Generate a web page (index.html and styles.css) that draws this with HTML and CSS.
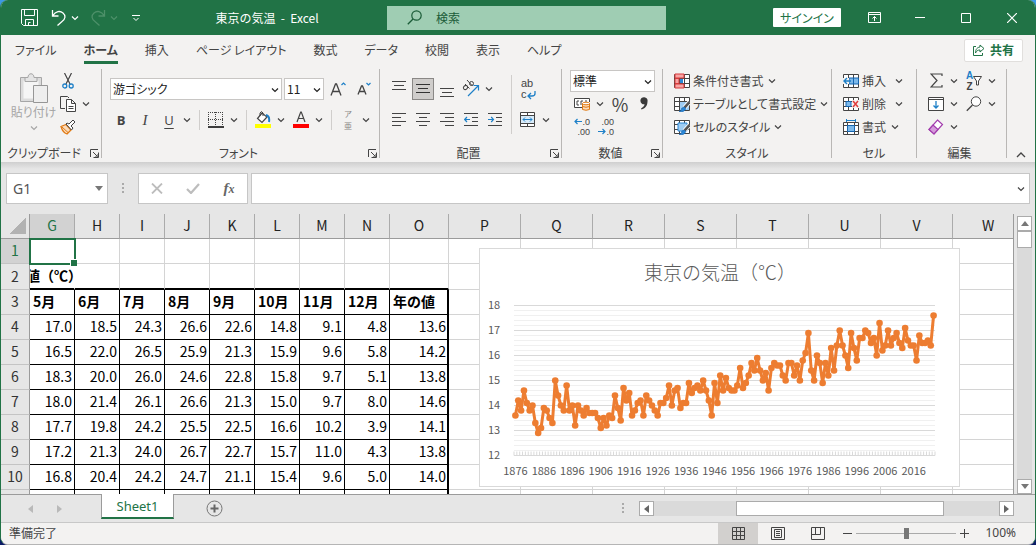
FILE: index.html
```
<!DOCTYPE html>
<html lang="ja">
<head>
    <meta charset="UTF-8">
    <meta name="viewport" content="width=device-width, initial-scale=1.0">
    <title>東京の気温 - Excel</title>
    <link rel="stylesheet" href="styles.css">
</head>
<body>
    <!-- Shared icons -->
    <svg class="sprite" aria-hidden="true">
        <symbol id="chev" viewBox="0 0 8 6"><path d="M1 1.5l3 3 3-3" fill="none" stroke="currentColor" stroke-width="1.2"/></symbol>
        <symbol id="launcher" viewBox="0 0 9 9"><path d="M.5 8V.5H8M3 3l4 4M8.500 3.500v5h-5M8 5v3H5" fill="none" stroke="currentColor"/></symbol>
        <symbol id="grid" viewBox="0 0 16 16"><path d="M.5 1.500h15v13H.5zM5.500 1.500v13M10.500 1.500v13M.5 5.500h15M.5 10.500h15" fill="#fff" stroke="#444"/></symbol>
        <symbol id="brush" viewBox="0 0 10 10"><path d="M9.500 1L5 6" stroke="#fff" stroke-width="4"/><path d="M9.500 1L5 6" stroke="#555" stroke-width="2.400"/><path d="M5 5.500L2.500 6.500Q2.500 9 0 9.500Q5 10.500 6 7z" fill="#2b88d8" stroke="#1565b0" stroke-width=".6"/></symbol>
    </svg>

    <div class="window">
        <header class="titlebar">
            <div class="title-left">
                <div class="quick">
                    <button class="qbtn" aria-label="上書き保存"><svg width="17" height="17" viewBox="0 0 17 17"><path d="M.5.5h16v16H2.500l-2-2zM3.500.5v6h10v-6M4.500 16.500v-6h8v6M7.500 16.500v-3h2" fill="none" stroke="#fff"/></svg></button>
                    <button class="qbtn undo" aria-label="元に戻す"><svg width="16" height="17" viewBox="0 0 16 17"><path d="M1.500 1v6h6M1.500 7C5 2 9 1.500 12 4s2.500 6-1 8.500L6.500 16.500" fill="none" stroke="#fff" stroke-width="1.300"/></svg><svg class="chev"><use href="#chev"/></svg></button>
                    <button class="qbtn redo" aria-label="やり直し"><svg width="16" height="17" viewBox="0 0 16 17"><path d="M14.500 1v6h-6M14.500 7C11 2 7 1.500 4 4s-2.500 6 1 8.500l4.500 4" fill="none" stroke="currentColor" stroke-width="1.300"/></svg><svg class="chev"><use href="#chev"/></svg></button>
                    <button class="qbtn custom" aria-label="カスタマイズ"><svg width="8" height="8" viewBox="0 0 8 8"><path d="M0 1.500h8M1.500 4L4 6.500 6.500 4" fill="none" stroke="#fff"/></svg></button>
                </div>
                <div class="doc-title">東京の気温&nbsp; -&nbsp; Excel</div>
            </div>
            <label class="search">
                <svg width="15" height="15" viewBox="0 0 15 15"><circle cx="9.500" cy="5.500" r="4.700" fill="none" stroke="#1b5c38" stroke-width="1.200"/><path d="M6 9L.8 14.200" stroke="#1b5c38" stroke-width="1.300"/></svg>
                <input type="text" placeholder="検索" aria-label="検索">
            </label>
            <div class="title-right">
                <button class="signin">サインイン</button>
                <button class="winbtn" aria-label="リボンの表示"><svg width="13" height="11" viewBox="0 0 13 11"><path d="M.5.5h12v10H.5zM.5 2.500h12M6.500 9V4.500M4.500 6.500l2-2 2 2" fill="none" stroke="#fff"/></svg></button>
                <button class="winbtn" aria-label="最小化"><svg width="10" height="10" viewBox="0 0 10 10"><path d="M0 4.500h10" stroke="#fff"/></svg></button>
                <button class="winbtn" aria-label="最大化"><svg width="10" height="10" viewBox="0 0 10 10"><path d="M.5.5h9v9h-9z" fill="none" stroke="#fff"/></svg></button>
                <button class="winbtn" aria-label="閉じる"><svg width="10" height="10" viewBox="0 0 10 10"><path d="M0 0l10 10M10 0L0 10" stroke="#fff" stroke-width="1.200"/></svg></button>
            </div>
        </header>

        <nav class="tabs">
            <a href="#">ファイル</a>
            <a href="#" class="active">ホーム</a>
            <a href="#">挿入</a>
            <a href="#">ページ レイアウト</a>
            <a href="#">数式</a>
            <a href="#">データ</a>
            <a href="#">校閲</a>
            <a href="#">表示</a>
            <a href="#">ヘルプ</a>
            <button class="share"><svg width="12" height="12" viewBox="0 0 12 12"><path d="M3 2.500H.5v9h9V9M7 1l4 3.500L7 8V6C4.500 6 3.500 7 2.500 9 2.500 5 4.500 3.300 7 3z" fill="none" stroke="#217346"/></svg>共有</button>
        </nav>

        <div class="ribbon">
            <section class="group clipboard">
                <div class="tools split">
                    <button class="paste">
                        <svg width="28" height="31" viewBox="0 0 28 31"><path d="M.5 4.500h21v24H.5z" fill="#dcdcdc" stroke="#a6a6a6"/><path d="M3.500 7.500h15v18h-15z" fill="#f5f5f5"/><path d="M5 8.500V4.500h3c0-5 6-5 6 0h3v4z" fill="#e4e4e4" stroke="#a6a6a6"/><path d="M13.500 12.500h14v17h-14z" fill="#eee" stroke="#969696"/></svg>
                        <span>貼り付け</span>
                        <svg class="chev"><use href="#chev"/></svg>
                    </button>
                    <div class="rows">
                        <div class="row"><button class="tool" aria-label="切り取り"><svg width="12" height="16" viewBox="0 0 12 16"><path d="M2.500 0L8 11M9.500 0L4 11" stroke="#444" stroke-width="1.200"/><circle cx="2.800" cy="13" r="2" fill="none" stroke="#1e80c8" stroke-width="1.300"/><circle cx="9.200" cy="13" r="2" fill="none" stroke="#1e80c8" stroke-width="1.300"/></svg></button></div>
                        <div class="row"><button class="tool" aria-label="コピー"><svg width="16" height="16" viewBox="0 0 16 16"><path d="M5 12.500H.5V.5h7L9 2" fill="none" stroke="#444"/><path d="M6.500 3.500h5l4 4v8h-9zM11.500 3.500v4h4M8.500 10.500h5M8.500 12.500h5" fill="#fff" stroke="#444"/></svg></button><button class="drop" aria-label="コピー オプション"><svg class="chev"><use href="#chev"/></svg></button></div>
                        <div class="row"><button class="tool" aria-label="書式のコピー"><svg width="16" height="16" viewBox="0 0 16 16"><path d="M1 7.500l5-2 5 5.500-4 4C4 14 2 11 1 7.500z" fill="#fbdcbc" stroke="#e07a14" stroke-width="1.300"/><path d="M2 8l6 5.500" stroke="#e07a14"/><path d="M6 5l5.500 6 1.500-2-2-2L15 3l-2-2-4 4-2-1z" fill="#fff" stroke="#444"/></svg></button></div>
                    </div>
                </div>
                <div class="caption">クリップボード<button class="launch" aria-label="クリップボードの詳細"><svg width="9" height="9"><use href="#launcher"/></svg></button></div>
            </section>

            <section class="group font">
                <div class="tools two">
                    <div class="row gap">
                        <div class="combo font-name"><select aria-label="フォント"><option>游ゴシック</option></select><svg class="chev"><use href="#chev"/></svg></div>
                        <div class="combo font-size"><select aria-label="フォント サイズ"><option>11</option></select><svg class="chev"><use href="#chev"/></svg></div>
                        <button class="tool" aria-label="拡大"><svg width="16" height="16" viewBox="0 0 16 16"><path d="M1 14.500L5.500 3h1L11 14.500M2.500 10.500h7" fill="none" stroke="#444" stroke-width="1.300"/><path d="M11.500 4l2-2 2 2" fill="none" stroke="#1e80c8" stroke-width="1.200"/></svg></button>
                        <button class="tool" aria-label="縮小"><svg width="14" height="16" viewBox="0 0 14 16"><path d="M1 13.500L4.500 5h1L9 13.500M2.500 10.500h5" fill="none" stroke="#444" stroke-width="1.300"/><path d="M9.500 2l2 2 2-2" fill="none" stroke="#1e80c8" stroke-width="1.200"/></svg></button>
                    </div>
                    <div class="row">
                        <button class="tool letter bold">B</button>
                        <button class="tool letter italic">I</button>
                        <button class="tool letter under">U</button>
                        <button class="drop" aria-label="下線"><svg class="chev"><use href="#chev"/></svg></button>
                        <i class="sep"></i>
                        <button class="tool" aria-label="罫線"><svg width="16" height="16" viewBox="0 0 16 16"><path d="M0 .5h16M0 7.500h16M.5 0v14M7.500 0v14M14.500 0v14" stroke="#444" stroke-dasharray="1 1"/><path d="M0 15h16" stroke="#000" stroke-width="1.500"/></svg></button>
                        <button class="drop" aria-label="罫線の種類"><svg class="chev"><use href="#chev"/></svg></button>
                        <i class="sep"></i>
                        <button class="tool" aria-label="塗りつぶし"><svg width="16" height="17" viewBox="0 0 16 17"><path d="M7 2L2.500 7.500 7 11.500 12 6z" fill="#fff" stroke="#444" stroke-width="1.200"/><path d="M5 5V2q1.500-3 3 0v3" fill="none" stroke="#444"/><path d="M11 4q4 1 3 7" fill="none" stroke="#1e80c8" stroke-width="2"/><path d="M0 13h16v4H0z" fill="#ff0"/></svg></button>
                        <button class="drop" aria-label="塗りつぶしの色"><svg class="chev"><use href="#chev"/></svg></button>
                        <button class="tool" aria-label="文字の色"><svg width="16" height="17" viewBox="0 0 16 17"><path d="M4 11L7.700 1h.6L12 11M5.500 7.500h5" fill="none" stroke="#444" stroke-width="1.200"/><path d="M0 13h16v4H0z" fill="red"/></svg></button>
                        <button class="drop" aria-label="フォントの色"><svg class="chev"><use href="#chev"/></svg></button>
                        <i class="sep"></i>
                        <button class="tool ruby">ア<br>亜</button>
                        <button class="drop" aria-label="ふりがな"><svg class="chev"><use href="#chev"/></svg></button>
                    </div>
                </div>
                <div class="caption">フォント<button class="launch" aria-label="フォントの詳細"><svg width="9" height="9"><use href="#launcher"/></svg></button></div>
            </section>

            <section class="group align">
                <div class="tools split">
                    <div class="rows two align-main">
                        <div class="row">
                            <button class="tool" aria-label="上揃え"><svg width="14" height="16" viewBox="0 0 14 16"><path d="M0 .5h14M2 4.500h10M0 8.500h14" stroke="#444"/></svg></button>
                            <button class="tool pressed" aria-label="上下中央揃え"><svg width="14" height="16" viewBox="0 0 14 16"><path d="M0 3.500h14M2 7.500h10M0 11.500h14" stroke="#333"/></svg></button>
                            <button class="tool" aria-label="下揃え"><svg width="14" height="16" viewBox="0 0 14 16"><path d="M0 7.500h14M2 11.500h10M0 15.500h14" stroke="#444"/></svg></button>
                            <button class="tool" aria-label="方向"><svg width="18" height="18" viewBox="0 0 18 18"><g fill="none" stroke="#444"><ellipse cx="3.500" cy="7.500" rx="2.200" ry="1.800" transform="rotate(-45 3.500 7.500)"/><path d="M3 4l4.500 4.500M5 0l5.500 6"/><ellipse cx="9.500" cy="3.500" rx="2" ry="2"/></g><path d="M6 16l10-10M11.500 5.500h5v5" fill="none" stroke="#1e80c8" stroke-width="1.200"/></svg></button>
                            <button class="drop" aria-label="方向の種類"><svg class="chev"><use href="#chev"/></svg></button>
                        </div>
                        <div class="row">
                            <button class="tool" aria-label="左揃え"><svg width="14" height="14" viewBox="0 0 14 14"><path d="M0 .5h14M0 4.500h9M0 8.500h14M0 12.500h9" stroke="#444"/></svg></button>
                            <button class="tool" aria-label="中央揃え"><svg width="14" height="14" viewBox="0 0 14 14"><path d="M0 .5h14M3 4.500h8M0 8.500h14M3 12.500h8" stroke="#444"/></svg></button>
                            <button class="tool" aria-label="右揃え"><svg width="14" height="14" viewBox="0 0 14 14"><path d="M0 .5h14M5 4.500h9M0 8.500h14M5 12.500h9" stroke="#444"/></svg></button>
                            <button class="tool" aria-label="インデントを減らす"><svg width="14" height="14" viewBox="0 0 14 14"><path d="M0 .5h14M8 4.500h6M8 8.500h6M0 12.500h14" stroke="#444"/><path d="M6 6.500H.8M3 4L.7 6.500 3 9" fill="none" stroke="#1e80c8" stroke-width="1.200"/></svg></button>
                            <button class="tool" aria-label="インデントを増やす"><svg width="14" height="14" viewBox="0 0 14 14"><path d="M0 .5h14M8 4.500h6M8 8.500h6M0 12.500h14" stroke="#444"/><path d="M0 6.500h5.500M3.200 4l2.300 2.500L3.200 9" fill="none" stroke="#1e80c8" stroke-width="1.200"/></svg></button>
                        </div>
                    </div>
                    <i class="sep tall"></i>
                    <div class="rows two">
                        <div class="row"><button class="tool wrap" aria-label="折り返して全体を表示">ab<br>c<svg width="9" height="9" viewBox="0 0 9 9"><path d="M8 0v2.500Q8 5 5 5H1M4 2L1 5l3 3" fill="none" stroke="#1e80c8" stroke-width="1.300"/></svg></button></div>
                        <div class="row"><button class="tool" aria-label="セルを結合"><svg width="16" height="16" viewBox="0 0 16 16"><path d="M.5.5h14v14H.5zM.5 3.500h14M.5 11.500h14M7.500.5v3M7.500 11.500v3" fill="#fff" stroke="#444"/><path d="M1 4h13v7H1z" fill="#d8ebf9"/><path d="M3 7.500h9M5 5.500l-2 2 2 2M10 5.500l2 2-2 2" fill="none" stroke="#1e80c8"/></svg></button><button class="drop" aria-label="結合の種類"><svg class="chev"><use href="#chev"/></svg></button></div>
                    </div>
                </div>
                <div class="caption">配置<button class="launch" aria-label="配置の詳細"><svg width="9" height="9"><use href="#launcher"/></svg></button></div>
            </section>

            <section class="group number">
                <div class="tools rows">
                    <div class="row"><div class="combo"><select aria-label="数値の書式"><option>標準</option></select><svg class="chev"><use href="#chev"/></svg></div></div>
                    <div class="row">
                        <button class="tool" aria-label="通貨"><svg width="17" height="14" viewBox="0 0 17 14"><path d="M8 10.500H.5v-9h15V5" fill="#fff" stroke="#444"/><path d="M5 4H3v4h2M7 8V4h2M11 4h2" fill="none" stroke="#444"/><path d="M8.500 6.500v6q3.500 1.500 7 0v-6z" fill="#fbdcbc" stroke="#e07a14"/><ellipse cx="12" cy="6.500" rx="3.500" ry="1.300" fill="#fff" stroke="#e07a14"/><path d="M8.500 9.500q3.500 1.500 7 0" fill="none" stroke="#e07a14"/></svg></button>
                        <button class="drop" aria-label="通貨の種類"><svg class="chev"><use href="#chev"/></svg></button>
                        <button class="tool percent">%</button>
                        <button class="tool" aria-label="桁区切り"><svg width="8" height="13" viewBox="0 0 8 13"><path d="M7.500 4.500C7.500 9 5 11.500 1.500 12.500L1 11.500C3 10.500 4.500 9 4.500 7.300A3.600 3.600 0 1 1 7.500 4.500z" fill="#3a3a3a"/></svg></button>
                    </div>
                    <div class="row">
                        <button class="tool decimals"><svg width="8" height="7" viewBox="0 0 8 7"><path d="M8 3.500H1M3.500 1L1 3.500 3.500 6" fill="none" stroke="#1e80c8" stroke-width="1.200"/></svg>.0<br>.00</button>
                        <button class="tool decimals">.00<br><svg width="8" height="7" viewBox="0 0 8 7"><path d="M0 3.500h7M4.500 1L7 3.500 4.500 6" fill="none" stroke="#1e80c8" stroke-width="1.200"/></svg>.0</button>
                    </div>
                </div>
                <div class="caption">数値<button class="launch" aria-label="数値の詳細"><svg width="9" height="9"><use href="#launcher"/></svg></button></div>
            </section>

            <section class="group styles">
                <div class="tools rows">
                    <button class="wide"><svg width="16" height="16" viewBox="0 0 16 16"><use href="#grid"/><path d="M1 1h9v4H1zM1 11h9v4H1z" fill="#f8a5a5" stroke="#d83b3b"/><path d="M1 5.500h4v5H1z" fill="#f8a5a5" stroke="#d83b3b"/><path d="M6 6h3v4H6z" fill="#2b88d8"/></svg>条件付き書式<svg class="chev"><use href="#chev"/></svg></button>
                    <button class="wide"><svg width="16" height="16" viewBox="0 0 16 16"><use href="#grid"/><path d="M6 6h9v8H6z" fill="#9fcdf3"/><use href="#brush" x="5" y="5" width="11" height="11"/></svg>テーブルとして書式設定<svg class="chev"><use href="#chev"/></svg></button>
                    <button class="wide"><svg width="16" height="16" viewBox="0 0 16 16"><use href="#grid"/><path d="M4 4h9v8H4z" fill="#9fcdf3" stroke="#2b88d8"/><use href="#brush" x="5" y="5" width="11" height="11"/></svg>セルのスタイル<svg class="chev"><use href="#chev"/></svg></button>
                </div>
                <div class="caption">スタイル</div>
            </section>

            <section class="group cells">
                <div class="tools rows">
                    <button class="wide"><svg width="16" height="16" viewBox="0 0 16 16"><use href="#grid"/><path d="M6 5h9.500v6H6z" fill="#7db9ea" stroke="#1565b0"/><path d="M10.500 5v6" stroke="#1565b0"/><path d="M0 5h6v6H0z" fill="#f3f2f1"/><path d="M8 8H1M4 5L1 8l3 3" fill="none" stroke="#1e80c8" stroke-width="1.400"/></svg><span>挿入</span><svg class="chev"><use href="#chev"/></svg></button>
                    <button class="wide"><svg width="16" height="16" viewBox="0 0 16 16"><use href="#grid"/><path d="M3 5.500h5v5H3z" fill="#7db9ea" stroke="#1565b0"/><path d="M9 4h7v8H9z" fill="#f3f2f1"/><path d="M10 5l5 6M15 5l-5 6" stroke="#e03b3b" stroke-width="1.500"/></svg><span>削除</span><svg class="chev"><use href="#chev"/></svg></button>
                    <button class="wide short"><svg width="16" height="16" viewBox="0 0 16 16"><path d="M.5 3.500h15v12H.5zM4.500 3.500v12M11.500 3.500v12M.5 6.500h15M.5 12.500h15" fill="#fff" stroke="#444"/><path d="M4.500 6.500h7v6h-7z" fill="#7db9ea" stroke="#1565b0"/><path d="M3.500 1.500h9M3.500 0v3M12.500 0v3" stroke="#1e80c8"/></svg><span>書式</span><svg class="chev"><use href="#chev"/></svg></button>
                </div>
                <div class="caption">セル</div>
            </section>

            <section class="group edit">
                <div class="tools rows">
                    <div class="row">
                        <button class="tool" aria-label="合計"><svg width="13" height="15" viewBox="0 0 13 15"><path d="M12 3V1H1l6 6.500L1 14h11v-2" fill="none" stroke="#444" stroke-width="1.200"/></svg></button>
                        <button class="drop" aria-label="合計の種類"><svg class="chev"><use href="#chev"/></svg></button>
                        <button class="tool sort" aria-label="並べ替えとフィルター"><span><b>A</b><br>Z</span><svg width="9" height="10" viewBox="0 0 9 10"><path d="M.5.5h8L5.500 5v4h-2V5z" fill="#fff" stroke="#444"/></svg></button>
                        <button class="drop" aria-label="並べ替えの種類"><svg class="chev"><use href="#chev"/></svg></button>
                    </div>
                    <div class="row">
                        <button class="tool" aria-label="フィル"><svg width="16" height="14" viewBox="0 0 16 14"><path d="M.5.5h15v13H.5zM.5 2.500h15" fill="#fff" stroke="#444"/><path d="M8 4v7M5.500 8.500L8 11l2.500-2.500" fill="none" stroke="#1e80c8" stroke-width="1.300"/></svg></button>
                        <button class="drop" aria-label="フィルの種類"><svg class="chev"><use href="#chev"/></svg></button>
                        <button class="tool" aria-label="検索と選択"><svg width="16" height="16" viewBox="0 0 16 16"><circle cx="10" cy="5.500" r="4.700" fill="#fff" stroke="#444"/><path d="M6.500 9L.8 14.800" stroke="#444" stroke-width="1.300"/></svg></button>
                        <button class="drop" aria-label="検索の種類"><svg class="chev"><use href="#chev"/></svg></button>
                    </div>
                    <div class="row">
                        <button class="tool" aria-label="クリア"><svg width="16" height="16" viewBox="0 0 16 16"><path d="M9.500 1l5 4.500L6 15 1 10.500z" fill="#fff" stroke="#a23cad" stroke-width="1.200"/><path d="M5 6l5 4.500L6 15 1 10.500z" fill="#d59bdb" stroke="#a23cad" stroke-width="1.200"/></svg></button>
                        <button class="drop" aria-label="クリアの種類"><svg class="chev"><use href="#chev"/></svg></button>
                    </div>
                </div>
                <div class="caption">編集</div>
            </section>

            <button class="collapse" aria-label="リボンを折りたたむ"><svg width="10" height="6" viewBox="0 0 10 6"><path d="M1 5l4-4 4 4" fill="none" stroke="#444" stroke-width="1.300"/></svg></button>
        </div>

        <div class="formula-bar">
            <div class="name-box"><input type="text" value="G1" aria-label="名前ボックス"><i class="tri down"></i></div>
            <div class="dots"></div>
            <div class="fx">
                <button aria-label="キャンセル"><svg width="12" height="11" viewBox="0 0 12 11"><path d="M1 .5l10 10M11 .5l-10 10" stroke="#bdbdbd" stroke-width="1.800"/></svg></button>
                <button aria-label="入力"><svg width="14" height="11" viewBox="0 0 14 11"><path d="M1 6l4 4 8-9" fill="none" stroke="#bdbdbd" stroke-width="2.200"/></svg></button>
                <button class="fx-label"><i>f<small>x</small></i></button>
            </div>
            <div class="formula"><input type="text" aria-label="数式バー"><svg class="chev"><use href="#chev"/></svg></div>
        </div>

        <main class="sheet-area">
            <div class="sheet">
                <table>
                    <colgroup>
                        <col class="c-head"><col class="c-month"><col class="c-month"><col class="c-month"><col class="c-month"><col class="c-month"><col class="c-month"><col class="c-month"><col class="c-month"><col class="c-year"><col class="c-plain"><col class="c-plain"><col class="c-plain"><col class="c-plain"><col class="c-plain"><col class="c-plain"><col class="c-plain"><col>
                    </colgroup>
                    <thead>
                        <tr><th class="corner"></th><th class="on">G</th><th>H</th><th>I</th><th>J</th><th>K</th><th>L</th><th>M</th><th>N</th><th>O</th><th>P</th><th>Q</th><th>R</th><th>S</th><th>T</th><th>U</th><th>V</th><th class="last">W</th></tr>
                    </thead>
                    <tbody id="cells"></tbody>
                </table>
                <svg class="chart" id="chart"></svg>
            </div>
            <div class="vscroll">
                <button aria-label="上へ"><i class="tri up"></i></button>
                <div class="thumb"></div>
                <div class="space"></div>
                <button aria-label="下へ"><i class="tri down"></i></button>
            </div>
        </main>

        <div class="sheet-tabs">
            <div class="tab-nav">
                <button aria-label="前のシート"><i class="tri left"></i></button>
                <button aria-label="次のシート"><i class="tri right"></i></button>
            </div>
            <button class="sheet-tab">Sheet1</button>
            <button class="add" aria-label="新しいシート"><svg width="17" height="17" viewBox="0 0 17 17"><circle cx="8.500" cy="8.500" r="7.500" fill="none" stroke="#767676"/><path d="M8.500 4.500v8M4.500 8.500h8" stroke="#666" stroke-width="2"/></svg></button>
            <div class="dots"></div>
            <div class="hscroll">
                <button aria-label="左へ"><i class="tri left"></i></button>
                <div class="space before"></div>
                <div class="thumb"></div>
                <div class="space after"></div>
                <button aria-label="右へ"><i class="tri right"></i></button>
            </div>
        </div>

        <footer class="status">
            <span class="ready">準備完了</span>
            <button class="view on" aria-label="標準"><svg width="13" height="13" viewBox="0 0 13 13"><path d="M.5.5h12v12H.5zM4.500.5v12M8.500.5v12M.5 4.500h12M.5 8.500h12" fill="none" stroke="#444"/></svg></button>
            <button class="view" aria-label="ページ レイアウト"><svg width="14" height="13" viewBox="0 0 14 13"><path d="M.5.5h13v12H.5zM3.500 2.500h7v8h-7zM5 4.500h4M5 6.500h4M5 8.500h4" fill="none" stroke="#444"/></svg></button>
            <button class="view" aria-label="改ページ プレビュー"><svg width="14" height="13" viewBox="0 0 14 13"><path d="M.5.5h13v12H.5zM4.500.5v7M9.500.5v7M.5 7.500h9" fill="none" stroke="#444"/></svg></button>
            <button class="zoom-btn" aria-label="縮小"><svg width="9" height="9" viewBox="0 0 9 9"><path d="M0 4.500h9" stroke="#444"/></svg></button>
            <input type="range" class="zoom-range" min="0" max="100" value="50" aria-label="ズーム">
            <button class="zoom-btn" aria-label="拡大"><svg width="9" height="9" viewBox="0 0 9 9"><path d="M0 4.500h9M4.500 0v9" stroke="#444"/></svg></button>
            <span class="percent-label">100%</span>
        </footer>
    </div>
    <script src="script.js"></script>
</body>
</html>
```
FILE: styles.css
```
* {
    box-sizing: border-box;
}
body {
    margin: 0;
    font-family: "Noto Sans CJK JP", sans-serif;
    font-size: 12px;
    line-height: 16px;
    font-feature-settings: "palt";
    color: #444;
    background: linear-gradient(#3c9ae6, #0b1c66);
}
button, input, select {
    font: inherit;
    font-feature-settings: inherit;
    color: inherit;
    border: none;
    background: none;
    padding: 0;
    margin: 0;
}
button {
    display: flex;
    align-items: center;
    justify-content: center;
}
svg {
    display: block;
    flex: none;
}
.sprite {
    position: absolute;
    width: 0;
    height: 0;
}
.window {
    display: flex;
    flex-direction: column;
    height: 100vh;
    border: solid #217346;
    border-width: 0 1px;
    border-bottom: 1px solid #b5b5b5;
    border-radius: 8px;
    overflow: hidden;
    background: #e6e6e6;
}
.chev {
    width: 8px;
    height: 6px;
}

/* Title bar */
.titlebar {
    display: grid;
    grid-template-columns: 386fr 279fr 369fr;
    align-items: center;
    height: 35px;
    flex: none;
    background: #217346;
    color: #fff;
}
.title-left, .title-right, .quick {
    display: flex;
    align-items: center;
}
.quick {
    width: 146px;
    padding-left: 20px;
}
.qbtn {
    gap: 4px;
}
.qbtn.undo {
    margin-left: 13px;
}
.qbtn.redo {
    margin-left: 11px;
    color: #4d9069;
}
.qbtn.custom {
    margin-left: 14px;
}
.doc-title {
    flex: 1;
    text-align: center;
    font-feature-settings: normal;
}
.search {
    display: flex;
    align-items: center;
    gap: 14px;
    height: 24px;
    padding-left: 20px;
    background: #9fcdb3;
}
.search input {
    flex: 1;
    min-width: 0;
    height: 24px;
}
.search input::placeholder {
    color: #1b5c38;
    opacity: 1;
}
.title-right {
    justify-content: flex-end;
}
.signin {
    width: 68px;
    height: 19px;
    margin-right: 10px;
    border-radius: 1px;
    background: #fff;
    color: #217346;
}
.winbtn {
    width: 46px;
    height: 34px;
}

/* Ribbon tabs */
.tabs {
    display: flex;
    align-items: center;
    gap: 27px;
    height: 30px;
    flex: none;
    padding: 0 12px 0 14px;
    background: #f3f2f1;
}
.tabs a {
    color: #444;
    text-decoration: none;
    height: 24px;
    padding-top: 2px;
    margin-top: 3px;
}
.tabs .active {
    font-weight: bold;
    border-bottom: 3px solid #217346;
}
.share {
    gap: 5px;
    width: 59px;
    height: 23px;
    margin-left: auto;
    border: 1px solid #e1dfdd;
    border-radius: 2px;
    background: #fff;
    color: #217346;
    font-weight: bold;
}

/* Ribbon */
.ribbon {
    display: flex;
    height: 97px;
    flex: none;
    padding-top: 4px;
    background: #f3f2f1;
}
.group {
    position: relative;
    display: flex;
    flex-direction: column;
    height: 89px;
    padding-left: 7px;
}
.group::after {
    content: "";
    position: absolute;
    right: 0;
    top: 0;
    bottom: 0;
    width: 1px;
    background: #b9b7b5;
}
.clipboard {
    width: 101px;
}
.font {
    width: 278px;
}
.align {
    width: 182px;
}
.number {
    width: 101px;
    padding-left: 8px;
}
.styles {
    width: 169px;
    padding-left: 11px;
}
.cells {
    width: 85px;
    padding-left: 11px;
}
.edit {
    width: 90px;
}
.tools {
    flex: 1;
}
.split {
    display: flex;
}
.row {
    display: flex;
    align-items: center;
    height: 23px;
}
.two {
    display: flex;
    flex-direction: column;
    gap: 8px;
    padding-top: 8px;
}
.gap {
    gap: 2px;
    padding-left: 1px;
}
.tool {
    width: 24px;
    height: 22px;
    flex: none;
}
.drop {
    width: 12px;
    height: 22px;
    margin-right: 2px;
}
.sep {
    width: 1px;
    height: 20px;
    margin: 0 4px;
    background: #d0cecc;
}
.sep.tall {
    height: 59px;
    margin-top: 6px;
    margin-left: 0;
}
.caption {
    display: flex;
    justify-content: center;
    height: 16px;
    margin: 0 22px 0 10px;
    margin-bottom: -3px;
    white-space: nowrap;
}
.clipboard .caption {
    margin-left: 0;
}
.launch {
    position: absolute;
    right: 3px;
    bottom: 0;
}
.paste {
    flex-direction: column;
    justify-content: flex-start;
    width: 48px;
    height: 70px;
    padding: 4px 0 0 3px;
    white-space: nowrap;
    color: #a6a6a6;
}
.paste .chev {
    margin-top: 5px;
}
.combo {
    position: relative;
    height: 22px;
    border: 1px solid #c8c6c4;
    background: #fff;
    color: #222;
}
.combo select {
    width: 100%;
    height: 20px;
    padding-left: 2px;
    appearance: none;
}
.combo .chev {
    position: absolute;
    right: 2px;
    top: 8px;
}
.font-name {
    width: 172px;
}
.font-size {
    width: 40px;
}
.number .combo {
    width: 85px;
}
.letter {
    font-size: 13px;
    font-family: "Open Sans", sans-serif;
}
.bold {
    font-weight: bold;
}
.italic {
    font-family: "Liberation Serif", serif;
    font-style: italic;
    font-size: 15px;
}
.under {
    text-decoration: underline;
    text-underline-offset: 3px;
}
.ruby {
    display: block;
    font-size: 8px;
    line-height: 12px;
    height: 24px;
    color: #8a8886;
}
.pressed {
    width: 22px;
    margin: 0 1px;
    border: 1px solid #8a8886;
    background: #cfcdcb;
}
.align-main {
    width: 124px;
}
.wrap {
    display: block;
    position: relative;
    padding-left: 5px;
    text-align: left;
    font-family: "Liberation Sans", sans-serif;
    font-size: 11px;
    line-height: 11px;
}
.wrap svg {
    position: absolute;
    left: 11px;
    bottom: 0;
}
.percent {
    font-size: 18px;
}
.decimals {
    display: block;
    font-family: "Liberation Sans", sans-serif;
    font-size: 9px;
    line-height: 10px;
    text-align: right;
    padding-right: 4px;
}
.decimals svg {
    display: inline-block;
}
.wide {
    gap: 3px;
    height: 23px;
    white-space: nowrap;
}
.wide .chev {
    margin-left: 1px;
}
.cells .wide span {
    width: 29px;
    text-align: left;
}
.cells .short span {
    width: 25px;
}
.sort span {
    font-family: "Liberation Sans", sans-serif;
    font-size: 10px;
    line-height: 11px;
    font-weight: bold;
}
.sort b {
    color: #1e80c8;
}
.collapse {
    align-self: flex-end;
    width: 28px;
    height: 14px;
}

/* Formula bar */
.formula-bar {
    display: flex;
    height: 52px;
    flex: none;
    padding: 11px 5px 10px;
    background: linear-gradient(#cfcfcf, #e6e6e6 7px);
}
.name-box, .fx, .formula {
    display: flex;
    align-items: center;
    height: 31px;
    border: 1px solid #c6c6c6;
    background: #fff;
}
.name-box {
    width: 102px;
    padding: 0 6px;
    font-family: "Noto Sans", sans-serif;
    font-size: 14px;
}
.name-box input {
    width: 82px;
    color: #555;
}
.dots {
    width: 2px;
    height: 10px;
    margin: 10px 14px;
    background: repeating-linear-gradient(#aaa 0 2px, transparent 2px 4px);
}
.fx {
    width: 110px;
}
.fx button {
    flex: 1;
}
.fx-label {
    font-family: "Liberation Serif", serif;
    font-size: 15px;
    font-weight: bold;
    color: #666;
}
.fx-label small {
    font-size: 12px;
}
.formula {
    flex: 1;
    margin-left: 3px;
    padding-right: 4px;
}
.formula input {
    flex: 1;
    min-width: 0;
}

/* Triangles of the scroll bars and selectors */
.tri {
    width: 0;
    height: 0;
    border: 4px solid transparent;
}
.tri.down {
    border-top: 5px solid #777;
    border-bottom: none;
}
.tri.up {
    border-bottom: 5px solid #777;
    border-top: none;
}
.tri.left {
    border-right: 5px solid #666;
    border-left: none;
}
.tri.right {
    border-left: 5px solid #666;
    border-right: none;
}

/* Sheet */
.sheet-area {
    display: flex;
    flex: 1;
    min-height: 0;
}
.sheet {
    position: relative;
    flex: 1;
    min-width: 0;
    overflow: hidden;
    border-right: 1px solid #9b9b9b;
    background: #fff;
}
.sheet table {
    width: 100%;
    table-layout: fixed;
    border-collapse: separate;
    border-spacing: 0;
    font-size: 14px;
    font-feature-settings: normal;
    line-height: 20px;
    color: #000;
}
.c-head {
    width: 29px;
}
.c-month {
    width: 45px;
}
.c-year {
    width: 59px;
}
.c-plain {
    width: 72px;
}
.sheet tr {
    height: 25px;
}
.sheet .r2 {
    height: 26px;
}
.sheet th, .sheet td {
    padding: 0 0 2px;
    white-space: nowrap;
    border: solid #d4d4d4;
    border-width: 0 1px 1px 0;
}
.sheet th {
    font-weight: normal;
    background: #e6e6e6;
    border-color: #c4c4c4;
}
.sheet thead th {
    border-bottom-color: #9b9b9b;
    border-right-color: #ababab;
    color: #222;
}
.sheet tbody th {
    border-right-color: #9b9b9b;
    color: #333;
}
.sheet .on {
    background: #d2d2d2;
    color: #217346;
}
.sheet thead .last {
    border-right: none;
    text-align: left;
    padding-left: 29px;
}
.sheet td:last-child {
    border-right: none;
}
.sheet .corner {
    background: linear-gradient(135deg, #e6e6e6 50%, #b2b2b2 50%) 8px 4px / 17px 16px no-repeat #e6e6e6;
    border-color: #9b9b9b;
}
.sheet .selected {
    position: relative;
    z-index: 1;
}
.selected::before {
    content: "";
    position: absolute;
    inset: -1px -2px -2px -1px;
    border: 2px solid #217346;
}
.selected::after {
    content: "";
    position: absolute;
    right: -3px;
    bottom: -3px;
    width: 6px;
    height: 6px;
    border: solid #fff;
    border-width: 1px 0 0 1px;
    background: #217346;
}
/* The title starts in a column to the left and runs on over its neighbour */
.sheet td.unit {
    clip-path: inset(0 -45px 0 0);
    border-right-color: #fff;
    font-weight: bold;
    font-size: 14px;
}
.unit span {
    margin-left: -4px;
}
.sheet .r2 td.framed {
    border-bottom: 2px solid #000;
}
.sheet td.data {
    padding-right: 2px;
    text-align: right;
    border-color: #000;
}
.sheet td.data.end {
    padding-right: 1px;
    border-right-width: 2px;
}
.sheet .r3 td.data {
    padding-left: 3px;
    text-align: left;
    font-weight: bold;
}

/* Chart floating over the cells */
.chart {
    position: absolute;
    left: 478px;
    top: 34px;
    width: 481px;
    height: 239px;
    border: 1px solid #d9d9d9;
    background: #fff;
    fill: #595959;
    font-size: 11px;
}
.chart .title {
    font-size: 19px;
    font-weight: 300;
    font-feature-settings: normal;
    text-anchor: middle;
}
.chart .x-label {
    text-anchor: middle;
}
.chart .minor {
    stroke: #f0f0f0;
}
.chart .major {
    stroke: #d9d9d9;
}
.chart .line {
    fill: none;
    stroke: #ed7d31;
    stroke-width: 3px;
    stroke-linejoin: round;
}
.chart circle {
    fill: #ed7d31;
}

/* Scroll bars */
.vscroll {
    display: flex;
    flex-direction: column;
    width: 15px;
    margin: 2px 3px 0 3px;
}
.vscroll button, .hscroll button {
    width: 15px;
    height: 15px;
    flex: none;
    border: 1px solid #ababab;
    background: #fff;
}
.vscroll .thumb {
    height: 17px;
    border: 1px solid #ababab;
    background: #fff;
}
.space {
    flex: 1;
    background: #dadada;
}
.sheet-tabs {
    display: flex;
    align-items: flex-start;
    height: 28px;
    flex: none;
    padding-right: 21px;
    border-top: 1px solid #9b9b9b;
}
.tab-nav {
    display: flex;
    justify-content: center;
    gap: 24px;
    width: 100px;
    height: 27px;
    padding-right: 12px;
    opacity: 0.35;
}
.sheet-tab {
    width: 73px;
    height: 25px;
    margin-top: -1px;
    border: solid #9b9b9b;
    border-width: 0 1px;
    border-bottom: 2px solid #217346;
    background: #fff;
    color: #217346;
    font-family: "Noto Sans", sans-serif;
    font-size: 13px;
}
.add {
    height: 27px;
    margin-left: 32px;
}
.sheet-tabs .dots {
    margin: 8px 15px 0 auto;
}
.hscroll {
    display: flex;
    width: 37%;
    margin-top: 6px;
}
.hscroll .thumb {
    flex: 207;
    border: 1px solid #ababab;
    background: #fff;
}
.hscroll .before {
    flex: 83;
}
.hscroll .after {
    flex: 56;
}

/* Status bar */
.status {
    display: flex;
    align-items: center;
    height: 22px;
    flex: none;
    padding: 0 19px 0 8px;
    border-top: 1px solid #c8c8c8;
    background: #f3f2f1;
}
.ready {
    margin-right: auto;
    padding-bottom: 2px;
}
.view {
    width: 40px;
    height: 21px;
}
.view.on {
    background: #d2d0ce;
}
.zoom-btn {
    width: 9px;
    height: 21px;
}
.view + .zoom-btn {
    margin-left: 5px;
}
.zoom-range {
    appearance: none;
    width: 100px;
    height: 11px;
    margin: 0 4px;
    background: linear-gradient(#aaa, #aaa) center / 100% 1px no-repeat;
}
.zoom-range::-webkit-slider-thumb {
    appearance: none;
    width: 5px;
    height: 11px;
    background: #777;
}
.percent-label {
    width: 47px;
    padding-bottom: 1px;
    text-align: right;
    font-family: "Noto Sans", sans-serif;
}
```
FILE: script.js
```
// Cells G to O of the visible rows
const rows = [
    ['5月', '6月', '7月', '8月', '9月', '10月', '11月', '12月', '年の値'],
    ['17.0', '18.5', '24.3', '26.6', '22.6', '14.8', '9.1', '4.8', '13.6'],
    ['16.5', '22.0', '26.5', '25.9', '21.3', '15.9', '9.6', '5.8', '14.2'],
    ['18.3', '20.0', '26.0', '24.6', '22.8', '15.8', '9.7', '5.1', '13.8'],
    ['18.0', '21.4', '26.1', '26.6', '21.3', '15.0', '9.7', '8.0', '14.6'],
    ['17.7', '19.8', '24.2', '25.5', '22.5', '16.6', '10.2', '3.9', '14.1'],
    ['17.2', '21.3', '24.0', '26.7', '22.7', '15.7', '11.0', '4.3', '13.8'],
    ['16.8', '20.4', '24.2', '24.7', '21.1', '15.4', '9.6', '5.0', '14.0'],
    ['', '', '', '', '', '', '', '', '']
];
const blank = n => '<td></td>'.repeat(n);

let html = `<tr><th class="on">1</th><td class="selected"></td>${blank(16)}</tr>`;
html += `<tr class="r2"><th>2</th><td class="unit framed"><span>値（℃）</span></td>${'<td class="framed"></td>'.repeat(8)}${blank(8)}</tr>`;
rows.forEach((row, i) => {
    const cells = row.map((v, c) => `<td class="data${c === 8 ? ' end' : ''}">${v}</td>`).join('');
    html += `<tr class="r${i + 3}"><th>${i < 8 ? i + 3 : ''}</th>${cells}${blank(8)}</tr>`;
});
document.getElementById('cells').innerHTML = html;

// Yearly mean temperature, 1876 onwards
const temps = [
    13.6, 14.2, 13.8, 14.6, 14.1, 13.8, 14.0, 13.3, 12.9, 13.1,
    13.9, 13.8, 13.5, 13.3, 15.0, 14.4, 14.0, 13.8, 14.8, 13.8,
    14.0, 13.2, 14.0, 13.8, 13.6, 13.9, 13.7, 13.7, 13.7, 13.5,
    13.1, 13.5, 13.2, 13.6, 13.5, 14.4, 13.9, 13.4, 14.7, 14.2,
    14.5, 13.6, 13.8, 14.1, 14.2, 13.6, 14.4, 14.2, 14.0, 13.8,
    13.6, 14.1, 14.1, 14.3, 14.8, 14.0, 14.6, 14.7, 13.9, 14.1,
    14.1, 14.9, 14.5, 14.7, 14.8, 14.6, 15.0, 14.6, 14.2, 13.6,
    14.9, 14.1, 15.2, 14.6, 15.1, 14.7, 14.6, 14.6, 14.8, 15.5,
    14.7, 14.9, 15.2, 15.7, 15.4, 15.9, 15.4, 15.0, 15.3, 14.6,
    15.5, 15.7, 15.6, 15.6, 15.2, 15.0, 15.7, 15.7, 15.2, 15.6,
    15.0, 15.8, 16.1, 16.9, 15.4, 15.0, 16.0, 15.7, 14.9, 15.7,
    15.2, 16.3, 15.4, 16.4, 17.0, 16.4, 16.0, 15.5, 16.9, 16.3,
    15.8, 16.7, 16.7, 17.0, 16.9, 16.5, 16.7, 16.0, 17.3, 16.2,
    16.4, 17.0, 16.4, 16.7, 16.9, 16.5, 16.3, 17.1, 16.6, 16.4,
    16.4, 15.8, 16.8, 16.5, 16.5, 16.6, 16.4, 17.6
];
const left = 34, right = 455, bottom = 206.5, degree = 25;
const step = (right - left) / temps.length;
const px = i => left + step * (i + 0.5);
const py = t => bottom - (t - 12) * degree;

let chart = '<text class="title" x="240" y="31">東京の気温（℃）</text>';
for (let n = 1; n <= 30; n++) {
    if (n % 5) {
        const y = bottom - n * 5;
        chart += `<path class="minor" d="M${left} ${y}H${right}"/>`;
    }
}
for (let t = 12; t <= 18; t++) {
    chart += `<path class="major" d="M${left} ${py(t)}H${right}"/>`;
    chart += `<text x="8" y="${py(t) + 3.5}">${t}</text>`;
}
for (let i = 0; i <= temps.length; i++) {
    chart += `<path class="major" d="M${left + step * i} ${bottom}v-4"/>`;
}
for (let i = 0; i < temps.length; i += 10) {
    chart += `<text class="x-label" x="${px(i)}" y="226">${1876 + i}</text>`;
}
chart += `<polyline class="line" points="${temps.map((t, i) => px(i) + ',' + py(t)).join(' ')}"/>`;
temps.forEach((t, i) => {
    chart += `<circle cx="${px(i)}" cy="${py(t)}" r="3.3"/>`;
});
document.getElementById('chart').innerHTML = chart;
```
